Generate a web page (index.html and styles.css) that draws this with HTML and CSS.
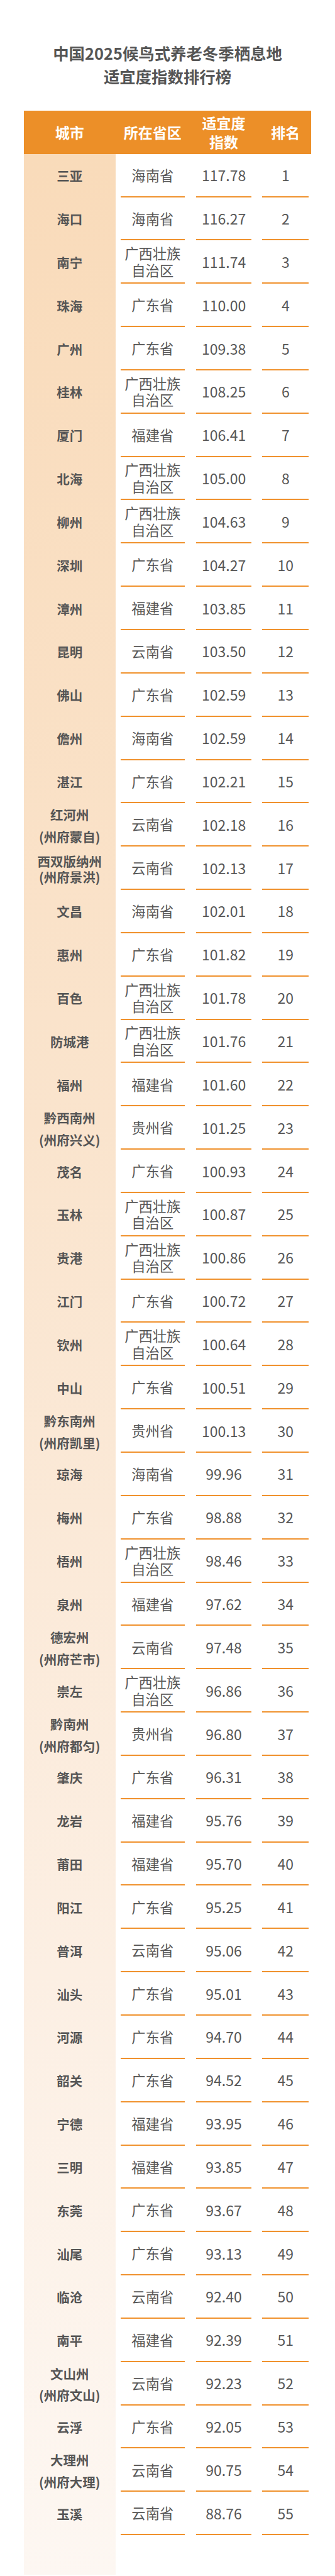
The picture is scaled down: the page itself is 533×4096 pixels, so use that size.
FILE: index.html
```html
<!DOCTYPE html>
<html lang="zh-CN">
<head>
<meta charset="utf-8">
<title>中国2025候鸟式养老冬季栖息地适宜度指数排行榜</title>
<link rel="stylesheet" href="styles.css">
</head>
<body>
<div class="page">
  <h1 class="title"><span>中国2025候鸟式养老冬季栖息地</span><span>适宜度指数排行榜</span></h1>
  <div class="table">
    <div class="row head">
      <div class="city">城市</div>
      <div class="cell prov"><div class="in">所在省区</div></div>
      <div class="cell idx"><div class="in">适宜度<br>指数</div></div>
      <div class="cell rank"><div class="in">排名</div></div>
    </div>
    <div class="tbody">
      <div class="row"><div class="city">三亚</div><div class="cell prov"><div class="in">海南省</div></div><div class="cell idx"><div class="in">117.78</div></div><div class="cell rank"><div class="in">1</div></div></div>
      <div class="row"><div class="city">海口</div><div class="cell prov"><div class="in">海南省</div></div><div class="cell idx"><div class="in">116.27</div></div><div class="cell rank"><div class="in">2</div></div></div>
      <div class="row"><div class="city">南宁</div><div class="cell prov"><div class="in">广西壮族<br>自治区</div></div><div class="cell idx"><div class="in">111.74</div></div><div class="cell rank"><div class="in">3</div></div></div>
      <div class="row"><div class="city">珠海</div><div class="cell prov"><div class="in">广东省</div></div><div class="cell idx"><div class="in">110.00</div></div><div class="cell rank"><div class="in">4</div></div></div>
      <div class="row"><div class="city">广州</div><div class="cell prov"><div class="in">广东省</div></div><div class="cell idx"><div class="in">109.38</div></div><div class="cell rank"><div class="in">5</div></div></div>
      <div class="row"><div class="city">桂林</div><div class="cell prov"><div class="in">广西壮族<br>自治区</div></div><div class="cell idx"><div class="in">108.25</div></div><div class="cell rank"><div class="in">6</div></div></div>
      <div class="row"><div class="city">厦门</div><div class="cell prov"><div class="in">福建省</div></div><div class="cell idx"><div class="in">106.41</div></div><div class="cell rank"><div class="in">7</div></div></div>
      <div class="row"><div class="city">北海</div><div class="cell prov"><div class="in">广西壮族<br>自治区</div></div><div class="cell idx"><div class="in">105.00</div></div><div class="cell rank"><div class="in">8</div></div></div>
      <div class="row"><div class="city">柳州</div><div class="cell prov"><div class="in">广西壮族<br>自治区</div></div><div class="cell idx"><div class="in">104.63</div></div><div class="cell rank"><div class="in">9</div></div></div>
      <div class="row"><div class="city">深圳</div><div class="cell prov"><div class="in">广东省</div></div><div class="cell idx"><div class="in">104.27</div></div><div class="cell rank"><div class="in">10</div></div></div>
      <div class="row"><div class="city">漳州</div><div class="cell prov"><div class="in">福建省</div></div><div class="cell idx"><div class="in">103.85</div></div><div class="cell rank"><div class="in">11</div></div></div>
      <div class="row"><div class="city">昆明</div><div class="cell prov"><div class="in">云南省</div></div><div class="cell idx"><div class="in">103.50</div></div><div class="cell rank"><div class="in">12</div></div></div>
      <div class="row"><div class="city">佛山</div><div class="cell prov"><div class="in">广东省</div></div><div class="cell idx"><div class="in">102.59</div></div><div class="cell rank"><div class="in">13</div></div></div>
      <div class="row"><div class="city">儋州</div><div class="cell prov"><div class="in">海南省</div></div><div class="cell idx"><div class="in">102.59</div></div><div class="cell rank"><div class="in">14</div></div></div>
      <div class="row"><div class="city">湛江</div><div class="cell prov"><div class="in">广东省</div></div><div class="cell idx"><div class="in">102.21</div></div><div class="cell rank"><div class="in">15</div></div></div>
      <div class="row"><div class="city two">红河州<br>(州府蒙自)</div><div class="cell prov"><div class="in">云南省</div></div><div class="cell idx"><div class="in">102.18</div></div><div class="cell rank"><div class="in">16</div></div></div>
      <div class="row"><div class="city two tight">西双版纳州<br>(州府景洪)</div><div class="cell prov"><div class="in">云南省</div></div><div class="cell idx"><div class="in">102.13</div></div><div class="cell rank"><div class="in">17</div></div></div>
      <div class="row"><div class="city">文昌</div><div class="cell prov"><div class="in">海南省</div></div><div class="cell idx"><div class="in">102.01</div></div><div class="cell rank"><div class="in">18</div></div></div>
      <div class="row"><div class="city">惠州</div><div class="cell prov"><div class="in">广东省</div></div><div class="cell idx"><div class="in">101.82</div></div><div class="cell rank"><div class="in">19</div></div></div>
      <div class="row"><div class="city">百色</div><div class="cell prov"><div class="in">广西壮族<br>自治区</div></div><div class="cell idx"><div class="in">101.78</div></div><div class="cell rank"><div class="in">20</div></div></div>
      <div class="row"><div class="city">防城港</div><div class="cell prov"><div class="in">广西壮族<br>自治区</div></div><div class="cell idx"><div class="in">101.76</div></div><div class="cell rank"><div class="in">21</div></div></div>
      <div class="row"><div class="city">福州</div><div class="cell prov"><div class="in">福建省</div></div><div class="cell idx"><div class="in">101.60</div></div><div class="cell rank"><div class="in">22</div></div></div>
      <div class="row"><div class="city two">黔西南州<br>(州府兴义)</div><div class="cell prov"><div class="in">贵州省</div></div><div class="cell idx"><div class="in">101.25</div></div><div class="cell rank"><div class="in">23</div></div></div>
      <div class="row"><div class="city">茂名</div><div class="cell prov"><div class="in">广东省</div></div><div class="cell idx"><div class="in">100.93</div></div><div class="cell rank"><div class="in">24</div></div></div>
      <div class="row"><div class="city">玉林</div><div class="cell prov"><div class="in">广西壮族<br>自治区</div></div><div class="cell idx"><div class="in">100.87</div></div><div class="cell rank"><div class="in">25</div></div></div>
      <div class="row"><div class="city">贵港</div><div class="cell prov"><div class="in">广西壮族<br>自治区</div></div><div class="cell idx"><div class="in">100.86</div></div><div class="cell rank"><div class="in">26</div></div></div>
      <div class="row"><div class="city">江门</div><div class="cell prov"><div class="in">广东省</div></div><div class="cell idx"><div class="in">100.72</div></div><div class="cell rank"><div class="in">27</div></div></div>
      <div class="row"><div class="city">钦州</div><div class="cell prov"><div class="in">广西壮族<br>自治区</div></div><div class="cell idx"><div class="in">100.64</div></div><div class="cell rank"><div class="in">28</div></div></div>
      <div class="row"><div class="city">中山</div><div class="cell prov"><div class="in">广东省</div></div><div class="cell idx"><div class="in">100.51</div></div><div class="cell rank"><div class="in">29</div></div></div>
      <div class="row"><div class="city two">黔东南州<br>(州府凯里)</div><div class="cell prov"><div class="in">贵州省</div></div><div class="cell idx"><div class="in">100.13</div></div><div class="cell rank"><div class="in">30</div></div></div>
      <div class="row"><div class="city">琼海</div><div class="cell prov"><div class="in">海南省</div></div><div class="cell idx"><div class="in">99.96</div></div><div class="cell rank"><div class="in">31</div></div></div>
      <div class="row"><div class="city">梅州</div><div class="cell prov"><div class="in">广东省</div></div><div class="cell idx"><div class="in">98.88</div></div><div class="cell rank"><div class="in">32</div></div></div>
      <div class="row"><div class="city">梧州</div><div class="cell prov"><div class="in">广西壮族<br>自治区</div></div><div class="cell idx"><div class="in">98.46</div></div><div class="cell rank"><div class="in">33</div></div></div>
      <div class="row"><div class="city">泉州</div><div class="cell prov"><div class="in">福建省</div></div><div class="cell idx"><div class="in">97.62</div></div><div class="cell rank"><div class="in">34</div></div></div>
      <div class="row"><div class="city two">德宏州<br>(州府芒市)</div><div class="cell prov"><div class="in">云南省</div></div><div class="cell idx"><div class="in">97.48</div></div><div class="cell rank"><div class="in">35</div></div></div>
      <div class="row"><div class="city">崇左</div><div class="cell prov"><div class="in">广西壮族<br>自治区</div></div><div class="cell idx"><div class="in">96.86</div></div><div class="cell rank"><div class="in">36</div></div></div>
      <div class="row"><div class="city two">黔南州<br>(州府都匀)</div><div class="cell prov"><div class="in">贵州省</div></div><div class="cell idx"><div class="in">96.80</div></div><div class="cell rank"><div class="in">37</div></div></div>
      <div class="row"><div class="city">肇庆</div><div class="cell prov"><div class="in">广东省</div></div><div class="cell idx"><div class="in">96.31</div></div><div class="cell rank"><div class="in">38</div></div></div>
      <div class="row"><div class="city">龙岩</div><div class="cell prov"><div class="in">福建省</div></div><div class="cell idx"><div class="in">95.76</div></div><div class="cell rank"><div class="in">39</div></div></div>
      <div class="row"><div class="city">莆田</div><div class="cell prov"><div class="in">福建省</div></div><div class="cell idx"><div class="in">95.70</div></div><div class="cell rank"><div class="in">40</div></div></div>
      <div class="row"><div class="city">阳江</div><div class="cell prov"><div class="in">广东省</div></div><div class="cell idx"><div class="in">95.25</div></div><div class="cell rank"><div class="in">41</div></div></div>
      <div class="row"><div class="city">普洱</div><div class="cell prov"><div class="in">云南省</div></div><div class="cell idx"><div class="in">95.06</div></div><div class="cell rank"><div class="in">42</div></div></div>
      <div class="row"><div class="city">汕头</div><div class="cell prov"><div class="in">广东省</div></div><div class="cell idx"><div class="in">95.01</div></div><div class="cell rank"><div class="in">43</div></div></div>
      <div class="row"><div class="city">河源</div><div class="cell prov"><div class="in">广东省</div></div><div class="cell idx"><div class="in">94.70</div></div><div class="cell rank"><div class="in">44</div></div></div>
      <div class="row"><div class="city">韶关</div><div class="cell prov"><div class="in">广东省</div></div><div class="cell idx"><div class="in">94.52</div></div><div class="cell rank"><div class="in">45</div></div></div>
      <div class="row"><div class="city">宁德</div><div class="cell prov"><div class="in">福建省</div></div><div class="cell idx"><div class="in">93.95</div></div><div class="cell rank"><div class="in">46</div></div></div>
      <div class="row"><div class="city">三明</div><div class="cell prov"><div class="in">福建省</div></div><div class="cell idx"><div class="in">93.85</div></div><div class="cell rank"><div class="in">47</div></div></div>
      <div class="row"><div class="city">东莞</div><div class="cell prov"><div class="in">广东省</div></div><div class="cell idx"><div class="in">93.67</div></div><div class="cell rank"><div class="in">48</div></div></div>
      <div class="row"><div class="city">汕尾</div><div class="cell prov"><div class="in">广东省</div></div><div class="cell idx"><div class="in">93.13</div></div><div class="cell rank"><div class="in">49</div></div></div>
      <div class="row"><div class="city">临沧</div><div class="cell prov"><div class="in">云南省</div></div><div class="cell idx"><div class="in">92.40</div></div><div class="cell rank"><div class="in">50</div></div></div>
      <div class="row"><div class="city">南平</div><div class="cell prov"><div class="in">福建省</div></div><div class="cell idx"><div class="in">92.39</div></div><div class="cell rank"><div class="in">51</div></div></div>
      <div class="row"><div class="city two">文山州<br>(州府文山)</div><div class="cell prov"><div class="in">云南省</div></div><div class="cell idx"><div class="in">92.23</div></div><div class="cell rank"><div class="in">52</div></div></div>
      <div class="row"><div class="city">云浮</div><div class="cell prov"><div class="in">广东省</div></div><div class="cell idx"><div class="in">92.05</div></div><div class="cell rank"><div class="in">53</div></div></div>
      <div class="row"><div class="city two">大理州<br>(州府大理)</div><div class="cell prov"><div class="in">云南省</div></div><div class="cell idx"><div class="in">90.75</div></div><div class="cell rank"><div class="in">54</div></div></div>
      <div class="row"><div class="city">玉溪</div><div class="cell prov"><div class="in">云南省</div></div><div class="cell idx"><div class="in">88.76</div></div><div class="cell rank"><div class="in">55</div></div></div>
    </div>
  </div>
</div>
</body>
</html>
```

FILE: styles.css
```css
* {
  box-sizing: border-box;
}

html, body {
  margin: 0;
  padding: 0;
  background: #ffffff;
}

body {
  font-family: "Noto Sans CJK SC", "Noto Sans", sans-serif;
  color: #575757;
}

.page {
  width: 533px;
  padding-top: 65.5px;
}

.title {
  margin: 0;
  display: flex;
  flex-direction: column;
  align-items: center;
  font-size: 25.4px;
  line-height: 37.2px;
  font-weight: 700;
  color: #555555;
}

.table {
  margin: 36px 0 0 37.7px;
  width: 457.5px;
}

.row {
  display: flex;
  height: 68.85px;
}

.head {
  height: 68.8px;
  background: #ec8f28;
  color: #ffffff;
  font-size: 23px;
  font-weight: 700;
  line-height: 30.5px;
}

.city {
  width: 146px;
  flex: none;
  display: flex;
  align-items: center;
  justify-content: center;
  text-align: center;
}

.cell {
  flex: none;
  display: flex;
}

.cell .in {
  flex: 1;
  display: flex;
  align-items: center;
  justify-content: center;
  text-align: center;
}

.prov {
  width: 101.6px;
  margin-left: 8.3px;
}

.idx {
  width: 88.2px;
  margin-left: 18.4px;
}

.rank {
  width: 73.8px;
  margin-left: 17.3px;
}

.tbody {
  padding-bottom: 63px;
  background-image: linear-gradient(to bottom, #f9dbba 0%, #fae4cd 40%, #fcefe3 75%, #fdf7f2 100%);
  background-size: 146px 100%;
  background-repeat: no-repeat;
}

.tbody .city {
  font-size: 20.5px;
  font-weight: 700;
  line-height: 26px;
  color: #555555;
}

.tbody .city.two {
  line-height: 34.4px;
  padding-top: 2px;
}

.tbody .city.two.tight {
  line-height: 25px;
}

.tbody .cell .in {
  border-bottom: 2.2px solid #f0922e;
}

.tbody .prov .in {
  font-size: 22.3px;
  line-height: 26.6px;
  font-weight: 400;
}

.tbody .idx .in,
.tbody .rank .in {
  font-size: 23px;
  line-height: 28px;
  font-weight: 400;
}
```
